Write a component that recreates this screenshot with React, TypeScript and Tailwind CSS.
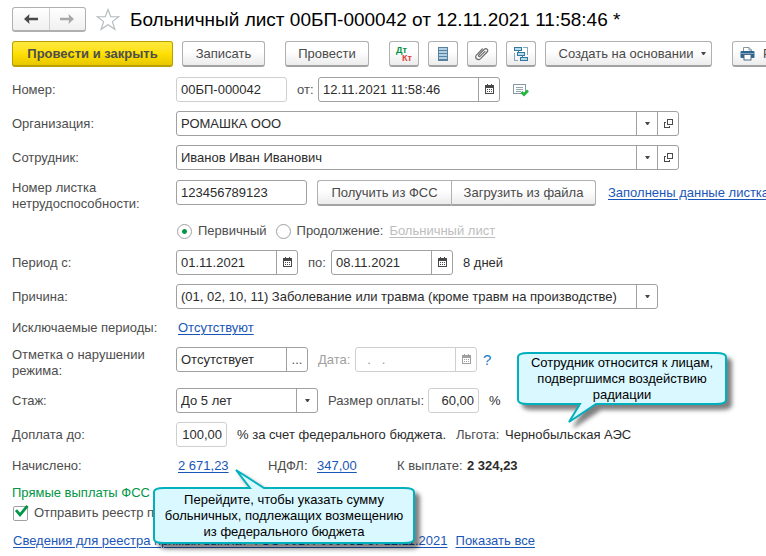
import React, { useState } from 'react';
import clsx from 'clsx';

const LINK = 'text-[#1a56b8] underline underline-offset-2 decoration-1 whitespace-nowrap';
const BUTTON =
    'flex h-[26px] shrink-0 items-center justify-center whitespace-nowrap rounded-[3px] border border-[#b0b0b0] border-b-2 border-b-[#a2a2a2] bg-linear-to-b from-white from-40% to-[#ececec] text-[#4a4a4a]';

/**
 * Icons
 */
function NavArrow({ flip, color }: { flip?: boolean; color: string }) {
    return (
        <svg width="14" height="10" viewBox="0 0 14 10" className={clsx(flip && 'rotate-180')}>
            <path d="M0 5 5.5 0 5 3.7H14V6.3H5L5.5 10Z" fill={color} />
        </svg>
    );
}

function StarIcon() {
    return (
        <svg width="24" height="23" viewBox="0 0 24 23" fill="none" stroke="#b3b9bd" strokeWidth="1.1">
            <path d="M12 1.5 14.7 8.7 22.8 8.8 16.4 13.6 18.9 21.3 12 16.7 5.1 21.3 7.6 13.6 1.2 8.8 9.3 8.7Z" />
        </svg>
    );
}

function DtKtIcon() {
    return (
        <svg width="18" height="18" viewBox="0 0 18 18" fontFamily="Liberation Sans, sans-serif" fontSize="9" fontWeight="700">
            <text x="1" y="8" fill="#00923f">Дт</text>
            <text x="7" y="16" fill="#e03c3c">Кт</text>
        </svg>
    );
}

function ListIcon() {
    return (
        <svg width="10" height="14" viewBox="0 0 10 14" shapeRendering="crispEdges">
            <rect width="10" height="14" fill="#56819f" />
            {[1, 4, 7, 10].map((y) => (
                <rect key={y} x="1" y={y} width="8" height="2" fill="#b4d0e4" />
            ))}
        </svg>
    );
}

function ClipIcon() {
    return (
        <svg width="16" height="16" viewBox="0 0 16 16" fill="none" stroke="#6b6b6b" strokeWidth="1.2" strokeLinecap="round">
            <path d="M11 5.4 6.2 10.2c-.9.9-2.2-.3-1.3-1.3l5.4-5.6c1.9-1.8 4.6.8 2.8 2.7l-6.5 6.6c-2.8 2.7-6.6-1-3.9-3.8L8.3 3" />
        </svg>
    );
}

function StructureIcon() {
    return (
        <svg width="16" height="16" viewBox="0 0 16 16" fill="none" stroke="#35789f" shapeRendering="crispEdges">
            <path d="M10 1.5H14.5V9M5 14.5H1.5V7" stroke="#85a9bf" />
            <rect x="1.5" y="1.5" width="7" height="3" fill="#b9dcea" />
            <rect x="4.5" y="6.5" width="7" height="3" fill="#b9dcea" />
            <rect x="7.5" y="11.5" width="7" height="3" fill="#b9dcea" />
            <path d="M5.5 4V7M9.5 9V12" />
        </svg>
    );
}

function PrinterIcon() {
    return (
        <svg width="15" height="15" viewBox="0 0 15 15">
            <path d="M3.5 5.5V1.5H9L11.5 4V5.5" fill="#fff" stroke="#8195a5" />
            <path d="M9 1.5V4H11.5" fill="none" stroke="#8195a5" />
            <rect x="0.5" y="5" width="14" height="7" rx="1" fill="#2f6690" />
            <rect x="1" y="7" width="13" height="1" fill="#7ca4c2" />
            <rect x="4" y="8.5" width="7" height="5.5" fill="#fff" stroke="#496d88" />
        </svg>
    );
}

function CalendarIcon({ muted }: { muted?: boolean }) {
    const color = muted ? '#a0a0a0' : '#484848';
    return (
        <svg width="9" height="10" viewBox="0 0 9 10" shapeRendering="crispEdges" className="mb-[2px]">
            <path d="M2 0H3V1H6V0H7V1H9V10H0V1H2Z" fill={color} />
            <rect x="1" y="4" width="7" height="5" fill="#fff" />
            {[2, 4, 6].map((x) => (
                <path key={x} d={`M${x} 5h1v1h-1zM${x} 7h1v1h-1z`} fill={color} />
            ))}
        </svg>
    );
}

function StatusIcon() {
    return (
        <svg width="16" height="14" viewBox="0 0 16 14" fill="none">
            <path d="M.5 1.5H12.5V10.5H.5Z" stroke="#8599a8" fill="#fff" shapeRendering="crispEdges" />
            <path d="M3 4.5H10M3 6.5H10M3 8.5H8" stroke="#93a5b2" shapeRendering="crispEdges" />
            <path d="M8.5 9 11 11.7 15 7.5" stroke="#22b43c" strokeWidth="2.6" />
        </svg>
    );
}

function OpenIcon() {
    return (
        <svg width="9" height="9" viewBox="0 0 9 9" fill="none" stroke="#4a4a4a" shapeRendering="crispEdges" className="mb-px">
            <path d="M3.5.5H8.5V5.5H3.5Z" />
            <path d="M2 3.5H.5V8.5H5.5V7" />
        </svg>
    );
}

function Caret() {
    return (
        <svg width="5" height="3" viewBox="0 0 5 3" className="mb-px">
            <path d="M0 0H5L3 3H2Z" fill="#484848" />
        </svg>
    );
}

/**
 * Form parts
 */
interface RowProps {
    label?: string;
    htmlFor?: string;
    children: React.ReactNode;
}

function Row({ label, htmlFor, children }: RowProps) {
    return (
        <div className="flex items-start">
            <label htmlFor={htmlFor} className="flex min-h-5 w-[164px] shrink-0 items-center self-stretch leading-4">
                {label}
            </label>
            {children}
        </div>
    );
}

interface FieldProps {
    id: string;
    value: string;
    className?: string;
    muted?: boolean;
    numeric?: boolean;
    action?: React.ReactNode;
    actionLabel?: string;
}

function Field({ id, value, className, muted, numeric, action, actionLabel }: FieldProps) {
    const border = muted ? 'border-[#cfcfcf]' : 'border-[#a0a0a0]';
    return (
        <div className={clsx('flex h-[25px] shrink-0 overflow-hidden rounded-[3px] border bg-white', border, className)}>
            <input
                id={id}
                defaultValue={value}
                className={clsx(
                    'w-full min-w-0 flex-1 bg-transparent px-1 outline-none',
                    muted && action ? 'text-[#999]' : 'text-[#2c2c2c]',
                    numeric && 'text-right'
                )}
            />
            {action && (
                <button type="button" aria-label={actionLabel} className={clsx('flex w-[21px] shrink-0 items-center justify-center border-l', border)}>
                    {action}
                </button>
            )}
        </div>
    );
}

interface PickerProps {
    id: string;
    value: string;
    className: string;
    openable?: boolean;
}

function Picker({ id, value, className, openable }: PickerProps) {
    return (
        <div className={clsx('flex h-[25px] rounded-[3px] border border-[#a0a0a0] bg-white', className)}>
            <div className="relative flex min-w-0 flex-1">
                <select id={id} className="w-full appearance-none bg-transparent px-1 text-[#2c2c2c] outline-none">
                    <option>{value}</option>
                </select>
                <span className="pointer-events-none absolute inset-y-0 right-0 flex w-[21px] items-center justify-center border-l border-[#a0a0a0]">
                    <Caret />
                </span>
            </div>
            {openable && (
                <button type="button" aria-label="Открыть" className="flex w-[21px] items-center justify-center border-l border-[#a0a0a0]">
                    <OpenIcon />
                </button>
            )}
        </div>
    );
}

interface RadioProps {
    label: string;
    checked: boolean;
    onChange: () => void;
}

function Radio({ label, checked, onChange }: RadioProps) {
    return (
        <label className="flex items-center gap-[6px]">
            <input
                type="radio"
                name="kind"
                checked={checked}
                onChange={onChange}
                className="size-[15px] appearance-none rounded-full border border-[#a0a0a0] bg-white checked:bg-radial checked:from-[#009646] checked:from-[2px] checked:to-white checked:to-[3px]"
            />
            {label}
        </label>
    );
}

interface CalloutProps {
    className: string;
    textClassName: string;
    width: number;
    height: number;
    path: string;
    lines: string[];
}

/**
 * Speech bubble with a tail, laid over the form
 */
function Callout({ className, textClassName, width, height, path, lines }: CalloutProps) {
    return (
        <div className={clsx('pointer-events-none absolute', className)}>
            <svg width={width} height={height} className="overflow-visible drop-shadow-[5px_5px_2px_rgba(0,0,0,0.5)]">
                <path d={path} fill="#d9f8ff" stroke="#00b0bd" strokeWidth="2" strokeLinejoin="miter" />
            </svg>
            <p className={clsx('absolute inset-x-0 text-center leading-4 text-black', textClassName)}>
                {lines.map((line) => (
                    <span key={line} className="block whitespace-nowrap">{line}</span>
                ))}
            </p>
        </div>
    );
}

export default function App() {
    const [kind, setKind] = useState('first');
    const [sendRegistry, setSendRegistry] = useState(true);

    return (
        <main className="relative overflow-hidden bg-white px-3 pt-[7px] pb-1 font-['Liberation_Sans',Arial,sans-serif] text-[13px] leading-4 text-[#4d4d4d]">
            {/* Title */}
            <header className="flex h-[25px] items-center">
                <div className="flex h-[25px] w-[74px] shrink-0 rounded-[3px] border border-b-2 border-[#b0b0b0] bg-linear-to-b from-white to-[#f0f0f0]">
                    <button type="button" aria-label="Назад" className="flex flex-1 items-center justify-center border-r border-[#d0d0d0]">
                        <NavArrow color="#4a4a4a" />
                    </button>
                    <button type="button" aria-label="Вперед" className="flex flex-1 items-center justify-center">
                        <NavArrow flip color="#a8a8a8" />
                    </button>
                </div>
                <button type="button" aria-label="Избранное" className="ml-[10px] shrink-0">
                    <StarIcon />
                </button>
                <h1 className="ml-[10px] whitespace-nowrap text-[19px] leading-6 text-black">
                    Больничный лист 00БП-000042 от 12.11.2021 11:58:46 *
                </h1>
            </header>

            {/* Toolbar */}
            <div className="mt-[9px] flex gap-5">
                <div className="flex gap-[9px]">
                    <button type="button" className="flex h-[26px] w-[161px] shrink-0 items-center justify-center whitespace-nowrap rounded-[3px] border border-b-2 border-[#b8a000] bg-linear-to-b from-[#ffea3c] via-[#ffe000] to-[#e8c800] font-bold">
                        Провести и закрыть
                    </button>
                    <button type="button" className={clsx(BUTTON, 'w-[83px]')}>Записать</button>
                </div>
                <button type="button" className={clsx(BUTTON, 'w-[84px]')}>Провести</button>
                <div className="flex gap-[9px]">
                    <button type="button" aria-label="Проводки" className={clsx(BUTTON, 'w-[30px]')}><DtKtIcon /></button>
                    <button type="button" aria-label="Список" className={clsx(BUTTON, 'w-[30px]')}><ListIcon /></button>
                    <button type="button" aria-label="Файлы" className={clsx(BUTTON, 'w-[30px]')}><ClipIcon /></button>
                    <button type="button" aria-label="Структура" className={clsx(BUTTON, 'w-[30px]')}><StructureIcon /></button>
                    <button type="button" className={clsx(BUTTON, 'w-[167px] gap-2 pl-2')}>
                        Создать на основании
                        <Caret />
                    </button>
                </div>
                <button type="button" className={clsx(BUTTON, 'gap-2 px-[7px]')}>
                    <PrinterIcon />
                    Р
                </button>
            </div>

            <form className="mt-[10px] flex flex-col gap-[9px]">
                <Row label="Номер:" htmlFor="number">
                    <Field id="number" value="00БП-000042" muted className="w-[111px]" />
                    <label htmlFor="date" className="ml-[10px] w-[21px] leading-[25px]">от:</label>
                    <Field id="date" value="12.11.2021 11:58:46" className="w-[182px]" action={<CalendarIcon />} actionLabel="Календарь" />
                    <span className="ml-[13px] flex h-[25px] items-center"><StatusIcon /></span>
                </Row>
                <Row label="Организация:" htmlFor="company">
                    <Picker id="company" value="РОМАШКА ООО" className="w-full max-w-[503px]" openable />
                </Row>
                <Row label="Сотрудник:" htmlFor="employee">
                    <Picker id="employee" value="Иванов Иван Иванович" className="w-full max-w-[503px]" openable />
                </Row>
                <div className="pt-px">
                    <Row label="Номер листка нетрудоспособности:" htmlFor="sheet">
                        <Field id="sheet" value="123456789123" className="w-[131px]" />
                        <div className="ml-[10px] flex shrink-0">
                            <button type="button" className={clsx(BUTTON, 'w-[134px] rounded-r-none border-r-0')}>Получить из ФСС</button>
                            <button type="button" className={clsx(BUTTON, 'w-[145px] rounded-l-none')}>Загрузить из файла</button>
                        </div>
                        <a href="#sheet-data" className={clsx(LINK, 'ml-3 leading-[25px]')}>Заполнены данные листка</a>
                    </Row>
                </div>
                <Row>
                    <div className="flex h-5 items-center pl-px">
                        <Radio label="Первичный" checked={kind === 'first'} onChange={() => setKind('first')} />
                        <div className="ml-[9px]">
                            <Radio label="Продолжение:" checked={kind === 'next'} onChange={() => setKind('next')} />
                        </div>
                        <a href="#previous" className="ml-[6px] whitespace-nowrap text-[#bdbdbd] underline underline-offset-2">Больничный лист</a>
                    </div>
                </Row>
                <Row label="Период с:" htmlFor="from">
                    <Field id="from" value="01.11.2021" className="w-[122px]" action={<CalendarIcon />} actionLabel="Календарь" />
                    <label htmlFor="to" className="ml-[10px] w-[23px] leading-[25px]">по:</label>
                    <Field id="to" value="08.11.2021" className="w-[122px]" action={<CalendarIcon />} actionLabel="Календарь" />
                    <span className="ml-[10px] leading-[25px] text-[#2c2c2c]">8 дней</span>
                </Row>
                <Row label="Причина:" htmlFor="reason">
                    <Picker id="reason" value="(01, 02, 10, 11) Заболевание или травма (кроме травм на производстве)" className="w-full max-w-[482px]" />
                </Row>
                <Row label="Исключаемые периоды:">
                    <a href="#excluded" className={clsx(LINK, 'ml-[2px] leading-5')}>Отсутствуют</a>
                </Row>
                <Row label="Отметка о нарушении режима:" htmlFor="violation">
                    <Field id="violation" value="Отсутствует" className="w-[132px]" action="..." actionLabel="Выбрать" />
                    <label htmlFor="violation-date" className="ml-[10px] w-[37px] leading-[25px] text-[#a0a0a0]">Дата:</label>
                    <Field id="violation-date" value="  .   ." muted className="w-[122px]" action={<CalendarIcon muted />} actionLabel="Календарь" />
                    <button type="button" aria-label="Справка" className="ml-[6px] text-[15px] leading-[25px] text-[#1a7ac4]">?</button>
                </Row>
                <Row label="Стаж:" htmlFor="experience">
                    <Picker id="experience" value="До 5 лет" className="w-[142px]" />
                    <label htmlFor="rate" className="ml-[10px] w-[100px] whitespace-nowrap leading-[25px]">Размер оплаты:</label>
                    <Field id="rate" value="60,00" muted numeric className="w-[51px]" />
                    <span className="ml-[10px] leading-[25px] text-[#2c2c2c]">%</span>
                </Row>
                <Row label="Доплата до:" htmlFor="extra">
                    <Field id="extra" value="100,00" muted numeric className="w-[51px]" />
                    <span className="ml-[10px] w-[219px] whitespace-nowrap leading-[25px] text-[#2c2c2c]">% за счет федерального бюджета.</span>
                    <span className="w-[49px] leading-[25px]">Льгота:</span>
                    <span className="leading-[25px] text-[#2c2c2c]">Чернобыльская АЭС</span>
                </Row>
                <Row label="Начислено:">
                    <div className="flex pl-[2px] leading-5">
                        <div className="w-[90px]"><a href="#accrued" className={LINK}>2 671,23</a></div>
                        <span className="w-[49px]">НДФЛ:</span>
                        <div className="w-20"><a href="#tax" className={LINK}>347,00</a></div>
                        <span className="w-[70px] whitespace-nowrap">К выплате:</span>
                        <b className="text-[#2c2c2c]">2 324,23</b>
                    </div>
                </Row>

                <section>
                    <h2 className="text-[#009646]">Прямые выплаты ФСС</h2>
                    <label className="relative mt-1 flex items-center gap-[6px] whitespace-nowrap pl-px">
                        <input
                            type="checkbox"
                            checked={sendRegistry}
                            onChange={(e) => setSendRegistry(e.target.checked)}
                            className="size-[15px] appearance-none rounded-[2px] border border-[#a0a0a0]"
                        />
                        {sendRegistry && (
                            <svg width="16" height="14" viewBox="0 0 16 14" className="absolute bottom-[3px] left-[2px]" fill="none">
                                <path d="M2 6.2 6 10.8 13.5 1.8" stroke="#009646" strokeWidth="2.8" />
                            </svg>
                        )}
                        Отправить реестр прямых выплат
                    </label>
                </section>
                <div className="flex gap-2 pt-px pl-px leading-5">
                    <a href="#registry" className={LINK}>Сведения для реестра прямых выплат ФСС 00БП-000032 от 12.11.2021</a>
                    <a href="#all" className={LINK}>Показать все</a>
                </div>
            </form>

            <Callout
                className="left-[516px] top-[351px]"
                textClassName="top-1"
                width={212}
                height={73}
                path="M12 2H200Q210 2 210 6V49Q210 53 200 53H80L53 71 64 53H12Q2 53 2 49V6Q2 2 12 2Z"
                lines={['Сотрудник относится к лицам,', 'подвергшимся воздействию', 'радиации']}
            />
            <Callout
                className="left-[152px] top-[468px]"
                textClassName="top-6"
                width={264}
                height={76}
                path="M12 20H98L84 2 112 20H252Q262 20 262 24V71Q262 75 252 75H12Q2 75 2 71V24Q2 20 12 20Z"
                lines={['Перейдите, чтобы указать сумму', 'больничных, подлежащих возмещению', 'из федерального бюджета']}
            />
        </main>
    );
}
